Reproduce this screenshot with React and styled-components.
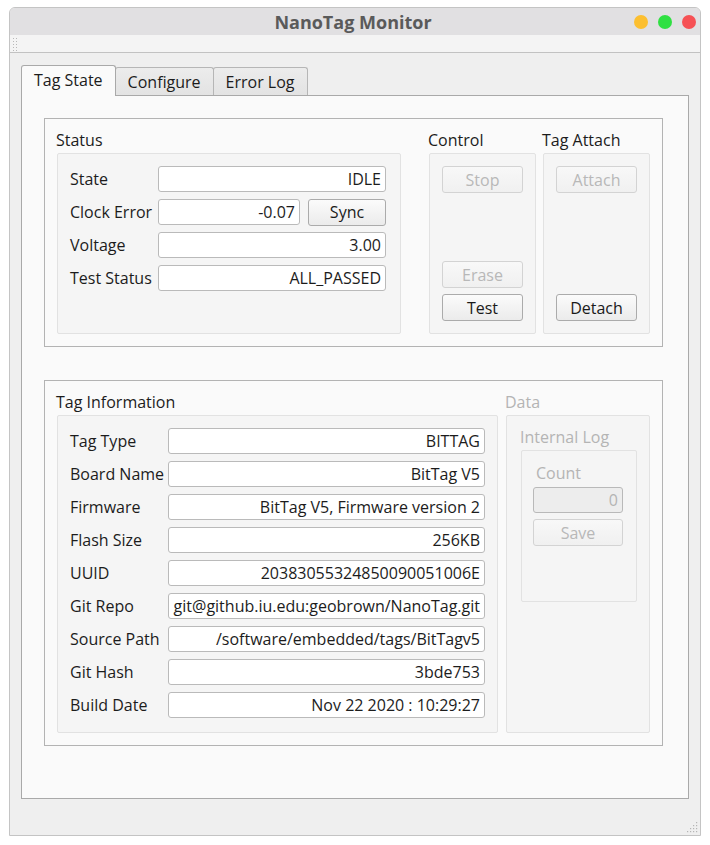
import React from "react";
import styled, { createGlobalStyle } from "styled-components";

const GlobalStyle = createGlobalStyle`
  html, body { margin: 0; background: #ffffff; }
  body {
    font-family: "Open Sans", "Noto Sans", sans-serif;
    font-size: 16px;
    color: #1c1c1c;
  }
  * { box-sizing: border-box; }
`;

const Window = styled.div`
  position: relative;
  margin: 7px 0 0 9px;
  width: 692px;
  height: 829px;
  border: 1px solid #c4c4c4;
  border-radius: 6px 6px 0 0;
  background: #efefef;
  display: flex;
  flex-direction: column;
  overflow: hidden;
`;

const TitleBar = styled.div`
  height: 27px;
  display: grid;
  grid-template-columns: 1fr auto 1fr;
  align-items: center;
  background: #e1e0e2;
  padding-right: 4px;
`;

const Title = styled.div`
  grid-column: 2;
  font-size: 18px;
  font-weight: 700;
  color: #5a5a5a;
`;

const Lights = styled.div`
  justify-self: end;
  display: flex;
  gap: 10px;
`;

const Light = styled.span`
  width: 14px;
  height: 14px;
  border-radius: 50%;
  background: ${(p) => p.$c};
`;

const ToolStrip = styled.div`
  height: 18px;
  background: #f4f4f4;
  border-bottom: 1px solid #c2c2c2;
  padding: 1px 0 0 2px;
`;

const Body = styled.div`
  flex: 1;
  display: flex;
  flex-direction: column;
  padding: 12px 11px 36px 11px;
`;

const TabBar = styled.div`
  display: flex;
  align-items: flex-end;
  height: 30px;
`;

const Tab = styled.div`
  position: relative;
  display: flex;
  align-items: center;
  padding: 0 12px 0 12px;
  margin-left: ${(p) => (p.$first ? "0" : "-1px")};
  height: ${(p) => (p.$active ? "31px" : "28px")};
  margin-bottom: ${(p) => (p.$active ? "-1px" : "0")};
  z-index: ${(p) => (p.$active ? 2 : 1)};
  border: 1px solid ${(p) => (p.$active ? "#a9a9a9" : "#b6b6b6")};
  border-bottom: none;
  border-radius: 3px 3px 0 0;
  background: ${(p) =>
    p.$active ? "#fafafa" : "linear-gradient(#ececec, #e3e3e3)"};
  padding-bottom: ${(p) => (p.$active ? "2px" : "0")};
`;

const Pane = styled.div`
  flex: 1;
  border: 1px solid #a9a9a9;
  background: #fafafa;
  padding: 22px 25px 0 22px;
  display: flex;
  flex-direction: column;
  gap: 33px;
`;

const Group = styled.div`
  border: 1px solid #b3b3b3;
  padding: 0 12px 12px 12px;
  display: flex;
  gap: ${(p) => p.$gap || 8}px;
`;

const Section = styled.div`
  display: flex;
  flex-direction: column;
  margin-left: ${(p) => p.$ml || 0}px;
`;

const SectionTitle = styled.div`
  height: ${(p) => p.$h || 34}px;
  display: flex;
  align-items: center;
  padding-top: 8px;
  padding-left: ${(p) => p.$pl || 0}px;
  margin-left: -1px;
  color: ${(p) => (p.$disabled ? "#b4b4b4" : "#1c1c1c")};
`;

const Frame = styled.div`
  width: ${(p) => p.$w}px;
  height: ${(p) => p.$h}px;
  border: 1px solid #e2e2e2;
  border-radius: 2px;
  background: #f5f5f5;
  padding: ${(p) => p.$pad || "12px"};
  display: flex;
  flex-direction: column;
`;

const FieldGrid = styled.div`
  display: grid;
  grid-template-columns: ${(p) => p.$label}px 1fr;
  grid-auto-rows: 26px;
  row-gap: 7px;
  align-items: center;
`;

const Label = styled.div`
  white-space: nowrap;
`;

const Field = styled.div`
  height: 26px;
  flex: 1 1 auto;
  min-width: 0;
  display: flex;
  align-items: center;
  justify-content: flex-end;
  padding: 0 4px;
  white-space: nowrap;
  overflow: hidden;
  background: ${(p) => (p.$disabled ? "#ededed" : "#ffffff")};
  border: 1px solid ${(p) => (p.$disabled ? "#b9b9b9" : "#bababa")};
  border-radius: 3px;
  color: ${(p) => (p.$disabled ? "#b4b4b4" : "#1c1c1c")};
`;

const FieldRow = styled.div`
  display: flex;
  gap: 8px;
`;

const Button = styled.button`
  height: 27px;
  width: ${(p) => (p.$w ? `${p.$w}px` : "100%")};
  flex: none;
  font: inherit;
  padding: 0;
  border-radius: 3px;
  border: 1px solid ${(p) => (p.disabled ? "#d3d3d3" : "#ababab")};
  background: ${(p) =>
    p.disabled
      ? "linear-gradient(#f8f8f8, #f0f0f0)"
      : "linear-gradient(#fbfbfb, #ebebeb)"};
  color: ${(p) => (p.disabled ? "#b8b8b8" : "#1a1a1a")};
`;

const ButtonColumn = styled.div`
  flex: 1;
  display: flex;
  flex-direction: column;
  justify-content: space-between;
`;

const ButtonStack = styled.div`
  display: flex;
  flex-direction: column;
  gap: 6px;
`;

const Grip = styled.svg`
  position: absolute;
  right: 2px;
  bottom: 2px;
`;

const statusRows = [
  ["State", "IDLE"],
  ["Clock Error", "-0.07", true],
  ["Voltage", "3.00"],
  ["Test Status", "ALL_PASSED"],
];

const infoRows = [
  ["Tag Type", "BITTAG"],
  ["Board Name", "BitTag V5"],
  ["Firmware", "BitTag V5, Firmware version 2"],
  ["Flash Size", "256KB"],
  ["UUID", "20383055324850090051006E"],
  ["Git Repo", "git@github.iu.edu:geobrown/NanoTag.git"],
  ["Source Path", "/software/embedded/tags/BitTagv5"],
  ["Git Hash", "3bde753"],
  ["Build Date", "Nov 22 2020 : 10:29:27"],
];

function HandleDots() {
  const dots = [];
  for (let y = 1; y < 16; y += 3) {
    dots.push(<rect key={`a${y}`} x="1" y={y} width="1" height="1" />);
    dots.push(<rect key={`b${y}`} x="4" y={y} width="1" height="1" />);
  }
  return (
    <svg width="6" height="16" fill="#b8b8b8">
      {dots}
    </svg>
  );
}

function ResizeGrip() {
  const pts = [
    [9, 0], [9, 3], [6, 3], [9, 6], [6, 6], [3, 6], [9, 9], [6, 9], [3, 9], [0, 9],
  ];
  return (
    <Grip width="11" height="11" fill="#b5b5b5">
      {pts.map(([x, y]) => (
        <rect key={`${x}-${y}`} x={x} y={y} width="1.2" height="1.2" />
      ))}
    </Grip>
  );
}

export default function App() {
  return (
    <>
      <GlobalStyle />
      <Window>
        <TitleBar>
          <Title>NanoTag Monitor</Title>
          <Lights>
            <Light $c="#fcbf30" />
            <Light $c="#2fe042" />
            <Light $c="#f65155" />
          </Lights>
        </TitleBar>
        <ToolStrip>
          <HandleDots />
        </ToolStrip>
        <Body>
          <TabBar>
            <Tab $active $first>Tag State</Tab>
            <Tab>Configure</Tab>
            <Tab>Error Log</Tab>
          </TabBar>
          <Pane>
            <Group $gap={7}>
              <Section>
                <SectionTitle>Status</SectionTitle>
                <Frame $w={344} $h={181} $pad="12px 14px 0 12px">
                  <FieldGrid $label={88}>
                    {statusRows.map(([label, value, sync]) => (
                      <React.Fragment key={label}>
                        <Label>{label}</Label>
                        {sync ? (
                          <FieldRow>
                            <Field>{value}</Field>
                            <Button $w={78}>Sync</Button>
                          </FieldRow>
                        ) : (
                          <Field>{value}</Field>
                        )}
                      </React.Fragment>
                    ))}
                  </FieldGrid>
                </Frame>
              </Section>
              <Section $ml={21}>
                <SectionTitle>Control</SectionTitle>
                <Frame $w={107} $h={181}>
                  <ButtonColumn>
                    <Button disabled>Stop</Button>
                    <ButtonStack>
                      <Button disabled>Erase</Button>
                      <Button>Test</Button>
                    </ButtonStack>
                  </ButtonColumn>
                </Frame>
              </Section>
              <Section>
                <SectionTitle>Tag Attach</SectionTitle>
                <Frame $w={107} $h={181}>
                  <ButtonColumn>
                    <Button disabled>Attach</Button>
                    <Button>Detach</Button>
                  </ButtonColumn>
                </Frame>
              </Section>
            </Group>

            <Group>
              <Section>
                <SectionTitle>Tag Information</SectionTitle>
                <Frame $w={441} $h={318} $pad="12px 12px 0 12px">
                  <FieldGrid $label={98}>
                    {infoRows.map(([label, value]) => (
                      <React.Fragment key={label}>
                        <Label>{label}</Label>
                        <Field>{value}</Field>
                      </React.Fragment>
                    ))}
                  </FieldGrid>
                </Frame>
              </Section>
              <Section>
                <SectionTitle $disabled>Data</SectionTitle>
                <Frame $w={144} $h={318} $pad="0 13px 0 14px">
                  <SectionTitle $disabled>Internal Log</SectionTitle>
                  <Frame $w={116} $h={152} $pad="0 13px 0 11px">
                    <SectionTitle $disabled $h={36} $pl={4}>
                      Count
                    </SectionTitle>
                    <ButtonStack>
                      <Field $disabled>0</Field>
                      <Button disabled>Save</Button>
                    </ButtonStack>
                  </Frame>
                </Frame>
              </Section>
            </Group>
          </Pane>
        </Body>
        <ResizeGrip />
      </Window>
    </>
  );
}
